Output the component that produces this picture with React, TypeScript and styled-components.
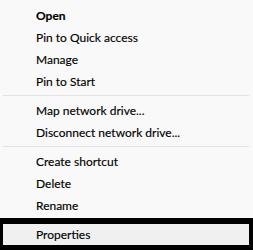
import React from "react";
import styled, { createGlobalStyle } from "styled-components";

const GlobalStyle = createGlobalStyle`
  html, body {
    margin: 0;
    background: #f9f9f9;
  }
`;

const Menu = styled.div`
  width: 253px;
  height: 250px;
  box-sizing: border-box;
  padding-top: 4px;
  background: #f9f9f9;
  font-family: Lato, "Segoe UI", sans-serif;
  font-size: 12px;
  color: #000;
  display: flex;
  flex-direction: column;
`;

const Item = styled.div<{ $bold?: boolean }>`
  height: 22px;
  display: flex;
  align-items: center;
  padding-left: 36px;
  font-weight: ${p => (p.$bold ? 700 : 400)};
  white-space: nowrap;
  -webkit-text-stroke: 0.15px #000;
`;

const Separator = styled.div`
  height: 7px;
  display: flex;
  align-items: center;
  padding: 0 4px 0 3px;

  &::after {
    content: "";
    flex: 1;
    height: 1px;
    background: #e3e3e3;
  }
`;

const FocusFrame = styled.div`
  margin-top: 2px;
  flex: 1;
  background: #000;
  padding: 6px 4px 5px 3px;
  display: flex;
`;

const ActiveItem = styled(Item)`
  flex: 1;
  height: auto;
  padding-left: 33px;
  background: #f0f0f0;
`;

const groups: string[][] = [
  ["Open", "Pin to Quick access", "Manage", "Pin to Start"],
  ["Map network drive...", "Disconnect network drive..."],
  ["Create shortcut", "Delete", "Rename"],
];

export default function App() {
  return (
    <>
      <GlobalStyle />
      <Menu>
        {groups.map((g, gi) => (
          <React.Fragment key={gi}>
            {gi > 0 && <Separator />}
            {g.map(label => (
              <Item key={label} $bold={label === "Open"}>
                {label}
              </Item>
            ))}
          </React.Fragment>
        ))}
        <FocusFrame>
          <ActiveItem>Properties</ActiveItem>
        </FocusFrame>
      </Menu>
    </>
  );
}
